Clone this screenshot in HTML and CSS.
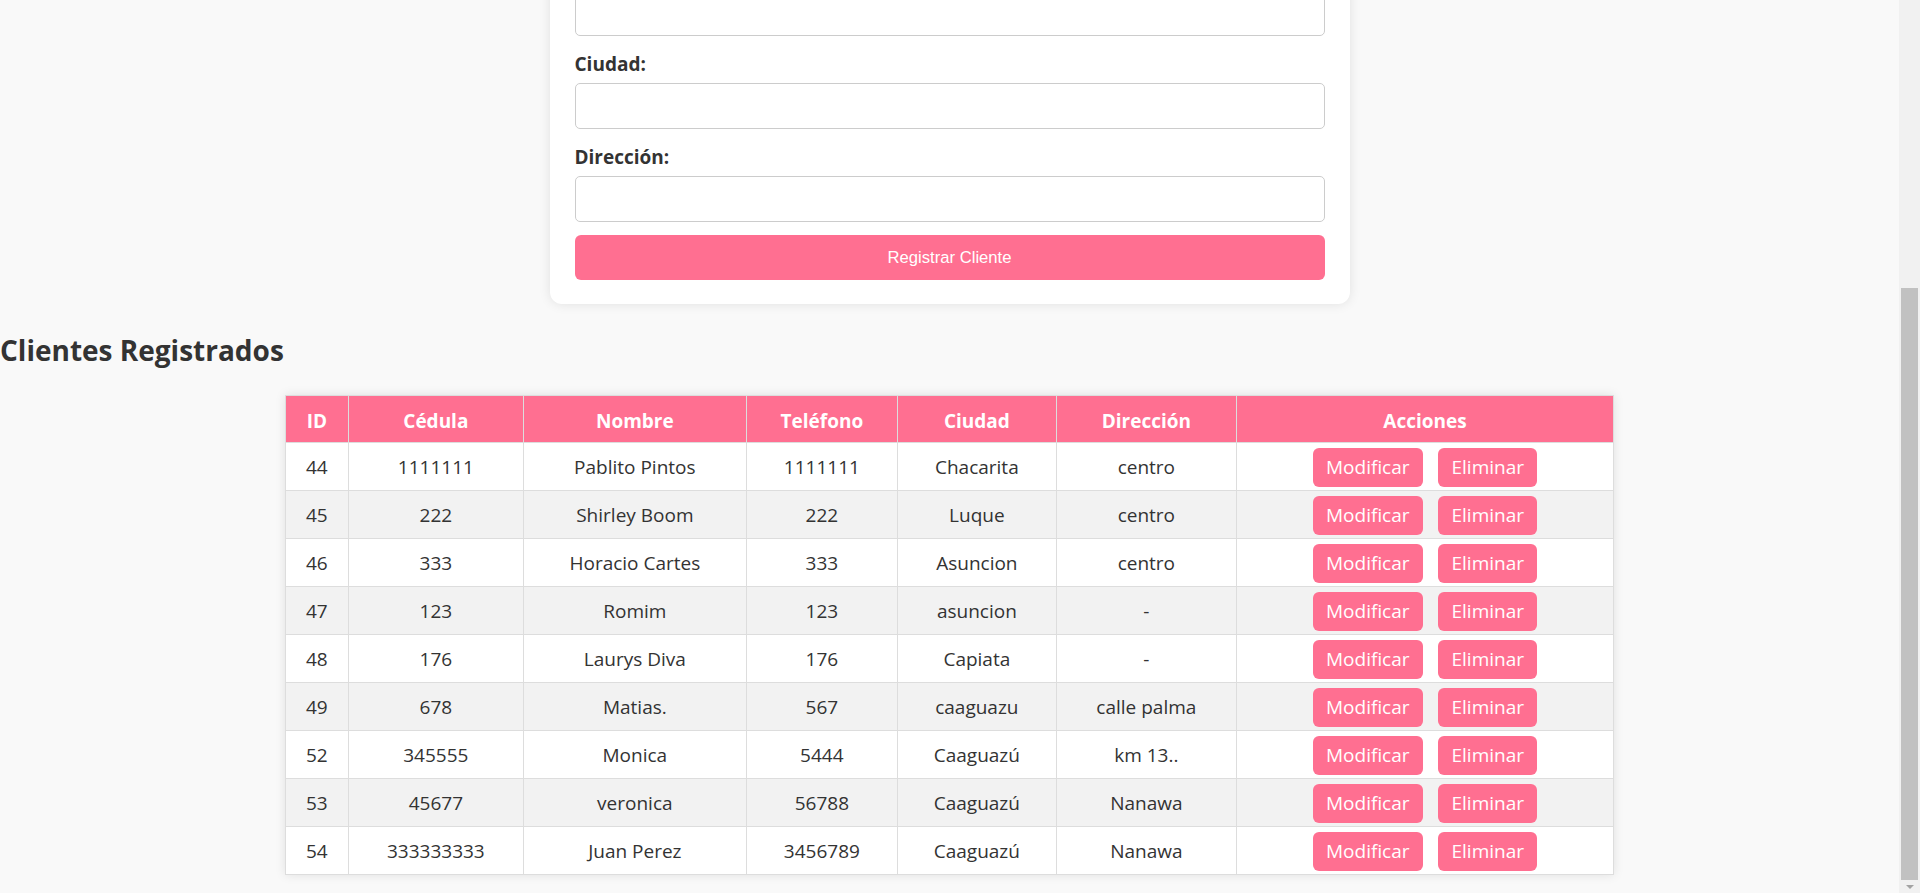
FILE: index.html
```html
<!DOCTYPE html>
<html lang="es">
<head>
<meta charset="utf-8">
<title>Registro de Clientes</title>
<link rel="stylesheet" href="styles.css">
</head>
<body>
  <main class="viewport">
    <form class="card">
      <input class="field-input" type="text" aria-label="Teléfono">
      <label class="field-label">Ciudad:</label>
      <input class="field-input" type="text">
      <label class="field-label">Dirección:</label>
      <input class="field-input" type="text">
      <button class="submit-btn" type="button">Registrar Cliente</button>
    </form>

    <h2 class="section-title">Clientes Registrados</h2>
    <table class="clients">
      <thead>
        <tr>
          <th class="c-id">ID</th>
          <th class="c-ced">Cédula</th>
          <th class="c-nom">Nombre</th>
          <th class="c-tel">Teléfono</th>
          <th class="c-ciu">Ciudad</th>
          <th class="c-dir">Dirección</th>
          <th class="c-acc">Acciones</th>
        </tr>
      </thead>
      <tbody>
        <tr><td>44</td><td>1111111</td><td>Pablito Pintos</td><td>1111111</td><td>Chacarita</td><td>centro</td><td><button class="act" type="button">Modificar</button> <button class="act" type="button">Eliminar</button></td></tr>
        <tr><td>45</td><td>222</td><td>Shirley Boom</td><td>222</td><td>Luque</td><td>centro</td><td><button class="act" type="button">Modificar</button> <button class="act" type="button">Eliminar</button></td></tr>
        <tr><td>46</td><td>333</td><td>Horacio Cartes</td><td>333</td><td>Asuncion</td><td>centro</td><td><button class="act" type="button">Modificar</button> <button class="act" type="button">Eliminar</button></td></tr>
        <tr><td>47</td><td>123</td><td>Romim</td><td>123</td><td>asuncion</td><td>-</td><td><button class="act" type="button">Modificar</button> <button class="act" type="button">Eliminar</button></td></tr>
        <tr><td>48</td><td>176</td><td>Laurys Diva</td><td>176</td><td>Capiata</td><td>-</td><td><button class="act" type="button">Modificar</button> <button class="act" type="button">Eliminar</button></td></tr>
        <tr><td>49</td><td>678</td><td>Matias.</td><td>567</td><td>caaguazu</td><td>calle palma</td><td><button class="act" type="button">Modificar</button> <button class="act" type="button">Eliminar</button></td></tr>
        <tr><td>52</td><td>345555</td><td>Monica</td><td>5444</td><td>Caaguazú</td><td>km 13..</td><td><button class="act" type="button">Modificar</button> <button class="act" type="button">Eliminar</button></td></tr>
        <tr><td>53</td><td>45677</td><td>veronica</td><td>56788</td><td>Caaguazú</td><td>Nanawa</td><td><button class="act" type="button">Modificar</button> <button class="act" type="button">Eliminar</button></td></tr>
        <tr><td>54</td><td>333333333</td><td>Juan Perez</td><td>3456789</td><td>Caaguazú</td><td>Nanawa</td><td><button class="act" type="button">Modificar</button> <button class="act" type="button">Eliminar</button></td></tr>
      </tbody>
    </table>
  </main>
  <div class="scrollbar" aria-hidden="true">
    <div class="sb-thumb"></div>
    <div class="sb-bottom"><span class="sb-arrow"></span></div>
  </div>
</body>
</html>
```

FILE: styles.css
```css
html,
body {
  height: 100%;
}
body {
  margin: 0;
  display: flex;
  overflow: hidden;
  font-family: "Segoe UI", "Open Sans", sans-serif;
  color: #333;
  background: #f9f9f9;
}
.viewport {
  flex: 1;
  min-width: 0;
  display: flex;
  flex-direction: column;
  justify-content: flex-end;
  overflow: hidden;
}
.viewport > * {
  flex-shrink: 0;
}
.card {
  width: 800px;
  box-sizing: border-box;
  margin: 0 auto;
  padding: 25px 25px 24px;
  background: #fff;
  border-radius: 12px;
  box-shadow: 0 0 12px rgba(0, 0, 0, 0.1);
  display: flex;
  flex-direction: column;
}
.field-label {
  display: block;
  font-size: 19px;
  font-weight: 700;
  line-height: 26px;
  margin: 15px 0 6px;
}
.field-input {
  display: block;
  height: 46px;
  box-sizing: border-box;
  border: 1px solid #ccc;
  border-radius: 5px;
  background: #fff;
  padding: 0 12px;
  font-size: 19px;
}
.submit-btn {
  margin-top: 13px;
  height: 45px;
  border: 0;
  border-radius: 6px;
  background: #ff6f91;
  color: #fff;
  font-family: "Liberation Sans", Arial, sans-serif;
  font-size: 16.67px;
}
.section-title {
  margin: 26px 0 25px;
  font-size: 28px;
  line-height: 40px;
  font-weight: 700;
}
.clients {
  width: 70%;
  margin: 0 auto 18px;
  border-collapse: collapse;
  table-layout: fixed;
  background: #fff;
  box-shadow: 0 0 10px rgba(0, 0, 0, 0.1);
  font-size: 19px;
}
.clients th,
.clients td {
  border: 1px solid #ddd;
  text-align: center;
  padding: 0;
}
.clients th {
  height: 43px;
  padding-top: 3px;
  background: #ff6f91;
  color: #fff;
  font-weight: 700;
}
.clients td {
  height: 46px;
  padding-top: 1px;
}
.clients tbody tr:nth-child(even) td {
  background: #f2f2f2;
}
.c-id { width: 62px; }
.c-ced { width: 174px; }
.c-nom { width: 222px; }
.c-tel { width: 150px; }
.c-ciu { width: 158px; }
.c-dir { width: 179px; }
.act {
  display: inline-block;
  margin: 0 5.5px;
  padding: 6px 13px;
  border: 0;
  border-radius: 6px;
  background: #ff6f91;
  color: #fff;
  font-family: "Segoe UI", "Open Sans", sans-serif;
  font-size: 19px;
  line-height: 27px;
  vertical-align: middle;
}
.scrollbar {
  width: 21px;
  flex-shrink: 0;
  background: #f1f1f1;
  display: flex;
  flex-direction: column;
  padding-top: 288px;
  box-sizing: border-box;
}
.sb-thumb {
  height: 592px;
  margin: 0 2px;
  background: #c1c1c1;
}
.sb-bottom {
  flex: 1;
  display: flex;
  align-items: center;
  justify-content: center;
}
.sb-arrow {
  width: 0;
  height: 0;
  border-left: 4px solid transparent;
  border-right: 4px solid transparent;
  border-top: 4px solid #a3a3a3;
}
```
